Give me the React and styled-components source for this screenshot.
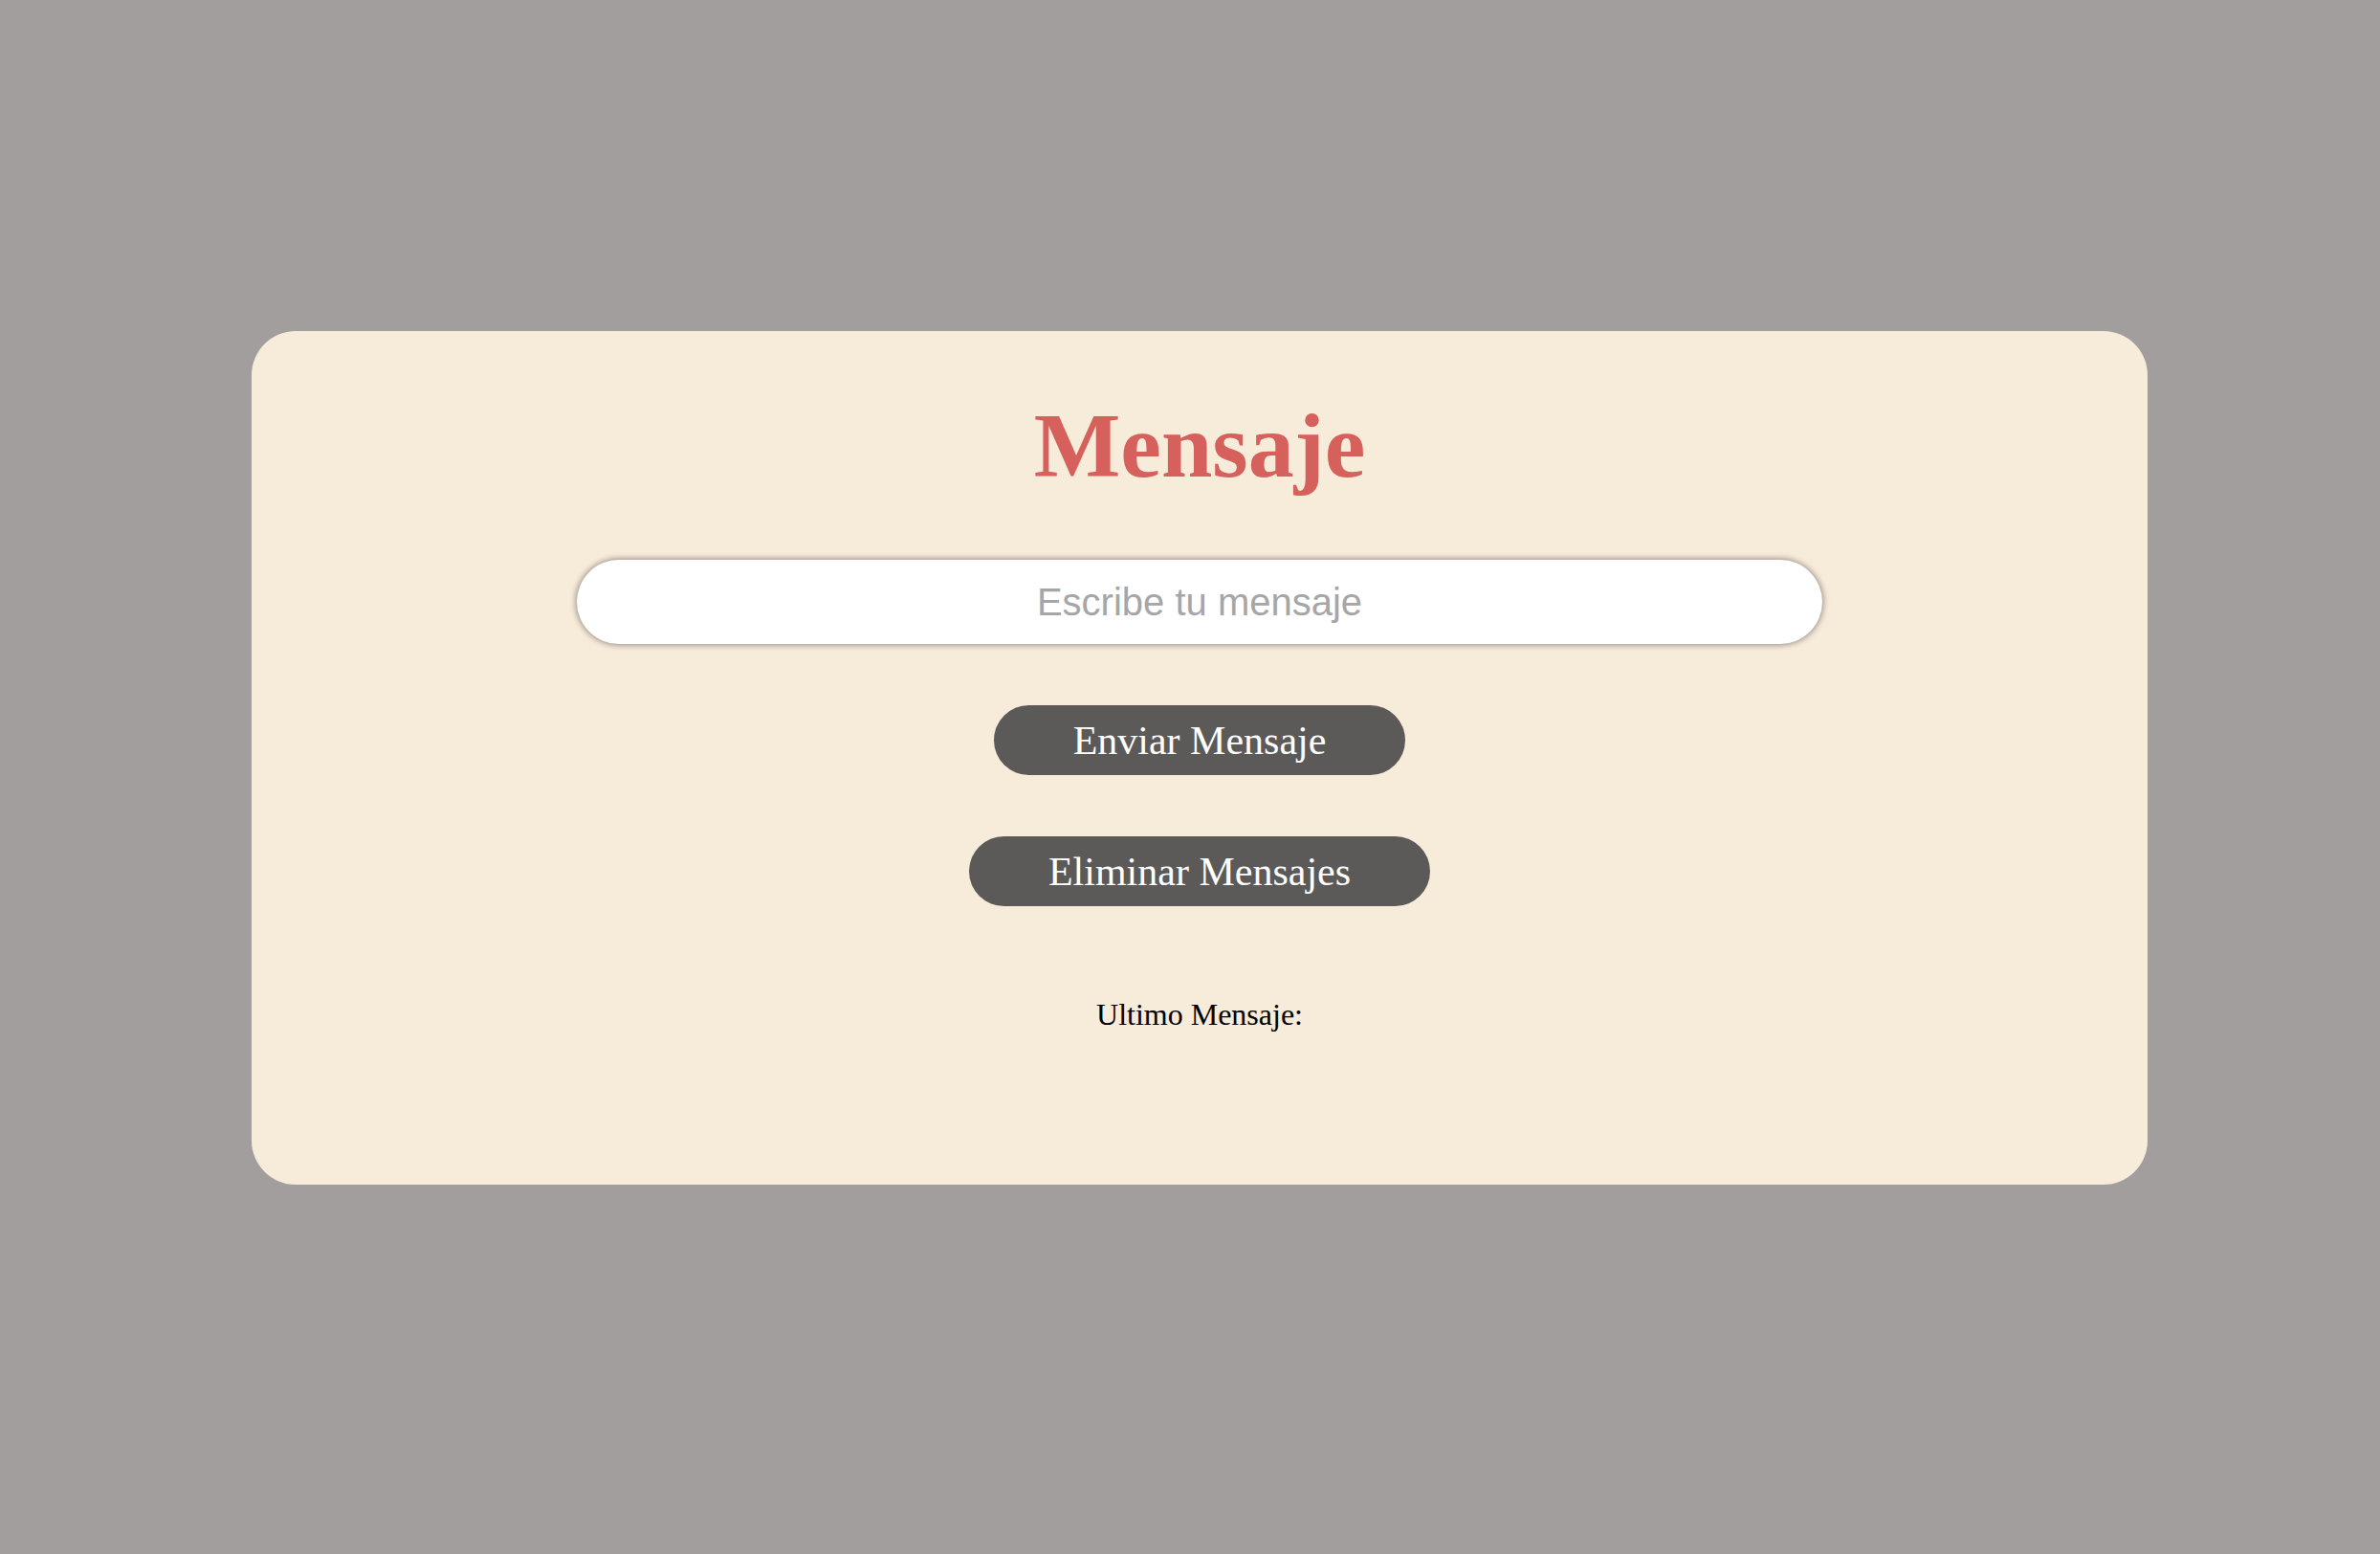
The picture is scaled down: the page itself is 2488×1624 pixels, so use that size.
import { useState } from 'react';
import styled, { createGlobalStyle } from 'styled-components';

const GlobalStyle = createGlobalStyle`
    html, body {
        margin : 0;
        padding : 0;
        background-color : #a39e9e;
        font-family : "Liberation Serif", "Times New Roman", serif;
    }
`;

const App = () => {

    const [ text, setText ] = useState('');
    const [ messages, setMessages ] = useState([]);

    const lastMessage = messages[messages.length - 1] ?? '';

    return (
        <PageStyled>
            <GlobalStyle />
            <CardWithStyled>
                <TitleWithStyled>Mensaje</TitleWithStyled>
                <InputWithStyled
                    type="text"
                    placeholder="Escribe tu mensaje"
                    value={ text }
                    onChange={e => setText(e.target.value)}
                />
                <ButtonWithStyled onClick={() => { if (text) { setMessages([ ...messages, text ]); setText(''); } }}>
                    Enviar Mensaje
                </ButtonWithStyled>
                <ButtonWithStyled onClick={() => setMessages([])}>
                    Eliminar Mensajes
                </ButtonWithStyled>
                <LastMessageWithStyled>Ultimo Mensaje: { lastMessage }</LastMessageWithStyled>
            </CardWithStyled>
        </PageStyled>
    )
}

const PageStyled = styled.div`
    min-height : 1624px;
    padding-top : 346px;
    box-sizing : border-box;
`;

const CardWithStyled = styled.div`
    width : 1982px;
    height : 892px;
    margin-left : 263px;
    box-sizing : border-box;
    padding-top : 64px;

    display : flex;
    flex-direction : column;
    align-items : center;

    background-color : #f7ebda;
    border-radius : 46px;
`;

const TitleWithStyled = styled.h1`
    margin : 0 0 64px;
    font-size : 96px;
    font-weight : bold;
    line-height : normal;
    color : #d6605b;
`;

const InputWithStyled = styled.input`
    width : 1302px;
    height : 88px;
    box-sizing : border-box;
    margin : 0 0 64px;
    padding : 0 40px;

    border : none;
    border-radius : 44px;
    background-color : #ffffff;
    box-shadow : 0 0 6px 1px rgba(0, 0, 0, 0.4);

    font-family : "Liberation Sans", Arial, sans-serif;
    font-size : 40px;
    text-align : center;
    color : #333;
    outline : none;

    &::placeholder {
        color : #a6a6a6;
    }
`;

const ButtonWithStyled = styled.button`
    height : 73px;
    margin : 0 0 64px;
    padding : 0 83px;

    border : none;
    border-radius : 37px;
    background-color : #5c5a58;

    font-family : "Liberation Serif", "Times New Roman", serif;
    font-size : 42px;
    color : #ffffff;
    cursor : pointer;
`;

const LastMessageWithStyled = styled.p`
    margin : 31px 0 0;
    font-size : 32px;
    line-height : normal;
    color : #000000;
`;

export default App;
